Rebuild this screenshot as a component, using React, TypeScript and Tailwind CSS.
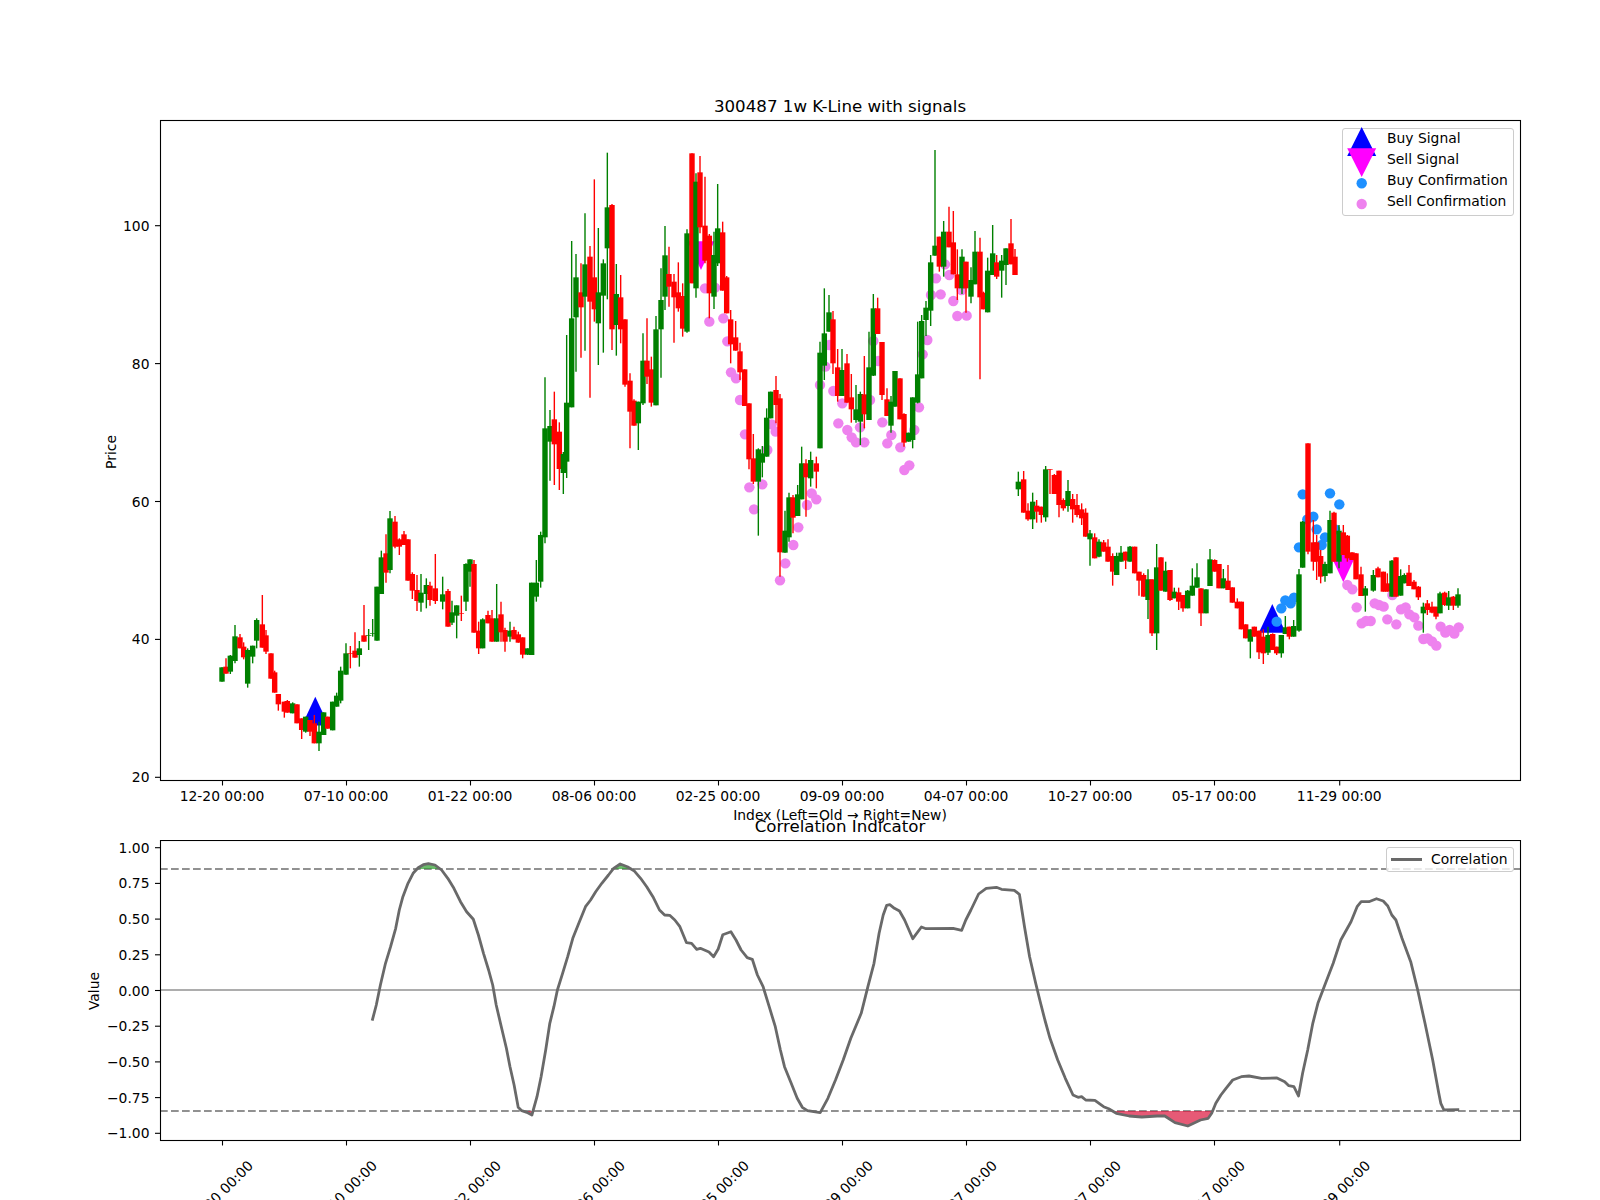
import React from 'react';

const G = 1;
const R = 0;

// candle rows traced per crop: [x, colour, wickTop, bodyTop, bodyBottom, wickBottom], crop pixels at 3x
const candleCrops: { x0: number; y0: number; rows: number[][] }[] = [
  {
    x0: 150,
    y0: 400,
    rows: [
      [216, G, 802, 802, 845, 845], [228, R, 775, 800, 821, 821], [241, G, 765, 767, 815, 822], [255, G, 675, 709, 783, 790],
      [270, R, 702, 712, 745, 745], [281, R, 727, 740, 772, 778], [293, G, 745, 750, 851, 863], [308, G, 737, 737, 770, 790],
      [320, G, 655, 660, 722, 745], [337, R, 585, 673, 743, 743], [348, R, 690, 706, 755, 762], [363, R, 760, 760, 836, 836],
      [374, R, 812, 817, 878, 878], [385, R, 882, 882, 913, 932], [403, R, 905, 905, 935, 953], [412, R, 900, 903, 938, 938],
      [428, G, 907, 910, 940, 940], [441, R, 913, 913, 970, 970], [455, R, 955, 955, 990, 1017], [467, G, 950, 950, 995, 998],
      [480, R, 960, 960, 995, 1008], [493, R, 945, 970, 1030, 1030], [507, G, 965, 995, 1030, 1053], [521, G, 937, 937, 1005, 1005],
      [533, R, 950, 950, 986, 986], [548, G, 905, 905, 991, 991], [560, G, 878, 887, 920, 920], [572, G, 800, 812, 902, 910],
      [588, G, 730, 760, 824, 824], [601, R, 738, 760, 762, 805], [615, R, 697, 752, 773, 773], [628, G, 723, 745, 765, 800],
      [642, R, 615, 706, 725, 725], [656, G, 687, 705, 707, 750], [668, G, 657, 700, 702, 710], [681, G, 560, 560, 722, 722],
      [694, G, 452, 472, 582, 582], [708, R, 403, 460, 518, 548], [720, G, 333, 355, 510, 520], [735, R, 348, 365, 440, 445],
      [748, R, 415, 418, 440, 465], [762, R, 393, 403, 435, 435], [774, R, 418, 418, 542, 542], [787, R, 517, 522, 572, 597],
      [801, R, 525, 570, 603, 633], [813, G, 522, 578, 608, 635], [829, G, 535, 555, 582, 625], [840, R, 545, 557, 600, 617],
      [856, R, 462, 565, 603, 612], [878, G, 530, 583, 605, 628], [894, R, 567, 573, 680, 680], [906, G, 602, 637, 668, 675],
      [920, G, 616, 616, 647, 715], [934, R, 587, 640, 642, 663], [948, G, 490, 492, 605, 633], [960, G, 478, 478, 515, 560],
      [972, R, 480, 492, 698, 698], [986, R, 665, 692, 745, 762], [998, G, 655, 658, 745, 745], [1014, R, 632, 645, 670, 670],
      [1026, R, 630, 655, 725, 725], [1040, G, 552, 655, 725, 725], [1053, R, 605, 643, 697, 725], [1065, R, 683, 690, 725, 755],
      [1080, G, 665, 692, 710, 725], [1092, R, 680, 690, 718, 718], [1105, R, 695, 703, 728, 728], [1118, R, 712, 712, 764, 775],
      [1133, G, 745, 745, 764, 765], [1145, G, 548, 548, 765, 765], [1159, G, 480, 548, 590, 605], [1172, G, 395, 405, 545, 563],
    ],
  },
  {
    x0: 500,
    y0: 130,
    rows: [
      [135, G, 742, 895, 1222, 1240], [150, G, 840, 888, 935, 1052], [163, R, 785, 868, 943, 1065], [178, R, 877, 905, 1017, 1080],
      [190, G, 966, 972, 1029, 1092], [200, G, 615, 818, 995, 1044], [215, G, 333, 565, 832, 832], [228, G, 372, 442, 562, 725],
      [243, R, 400, 487, 532, 683], [255, G, 250, 403, 500, 662], [270, R, 348, 380, 515, 803], [283, R, 148, 442, 538, 575],
      [295, G, 294, 487, 580, 705], [310, G, 388, 400, 497, 668], [322, G, 68, 232, 355, 508], [336, R, 222, 225, 598, 660],
      [349, G, 402, 492, 585, 677], [362, R, 435, 502, 598, 640], [375, R, 568, 568, 764, 770], [390, R, 730, 752, 845, 955],
      [402, R, 808, 812, 887, 887], [415, G, 815, 815, 880, 960], [429, G, 610, 692, 820, 825], [441, R, 565, 692, 740, 762],
      [454, R, 680, 718, 818, 830], [468, G, 558, 598, 826, 826], [483, G, 415, 510, 598, 743], [495, G, 288, 376, 500, 540],
      [507, R, 350, 432, 470, 530], [522, R, 432, 455, 502, 638], [535, R, 397, 487, 535, 545], [548, R, 460, 498, 596, 620],
      [561, G, 298, 310, 605, 608], [576, R, 70, 70, 460, 460], [588, G, 130, 155, 475, 503], [600, R, 78, 127, 292, 310],
      [615, R, 140, 287, 392, 400], [628, R, 312, 317, 490, 565], [642, G, 305, 375, 500, 537], [653, G, 162, 295, 400, 408],
    ],
  },
  {
    x0: 700,
    y0: 140,
    rows: [
      [68, R, 245, 277, 452, 452], [80, R, 408, 412, 520, 520], [92, R, 510, 538, 613, 670], [107, R, 543, 592, 632, 632],
      [120, R, 608, 634, 697, 720], [134, R, 688, 688, 798, 798],
    ],
  },
  {
    x0: 720,
    y0: 380,
    rows: [
      [87, R, 70, 70, 238, 268], [100, R, 162, 235, 305, 312], [115, G, 205, 208, 305, 467], [127, G, 198, 220, 248, 292],
      [140, G, 85, 113, 230, 230], [152, G, 35, 35, 115, 115], [168, R, -12, 30, 75, 130], [180, R, 42, 55, 517, 590],
      [195, G, 392, 452, 518, 518], [207, G, 338, 352, 472, 485], [219, R, 345, 352, 413, 460], [233, G, 315, 343, 408, 408],
      [245, G, 200, 250, 358, 358], [258, R, 238, 250, 292, 410], [272, G, 215, 240, 295, 320], [289, R, 230, 250, 275, 325],
    ],
  },
  {
    x0: 700,
    y0: 140,
    rows: [
      [360, G, 605, 638, 925, 925], [373, G, 445, 580, 677, 720], [387, G, 465, 517, 575, 575], [399, R, 513, 538, 670, 702],
      [413, R, 627, 682, 768, 785], [426, G, 627, 690, 768, 768], [441, R, 642, 670, 788, 788], [454, R, 702, 772, 808, 848],
      [468, G, 735, 808, 840, 848], [481, G, 755, 762, 845, 915], [493, R, 648, 763, 823, 865], [507, G, 575, 682, 840, 840],
      [520, G, 462, 505, 707, 708], [533, R, 473, 505, 582, 582], [546, R, 606, 606, 765, 780], [561, R, 745, 778, 828, 828],
      [573, G, 768, 785, 857, 878], [585, G, 693, 693, 800, 800], [600, R, 715, 715, 838, 838], [612, R, 820, 822, 908, 920],
      [626, G, 878, 878, 905, 905], [638, G, 772, 772, 900, 925], [653, G, 545, 703, 788, 790],
    ],
  },
  {
    x0: 900,
    y0: 140,
    rows: [
      [65, G, 525, 543, 715, 715], [78, G, 483, 503, 540, 588], [92, G, 345, 367, 512, 558], [105, G, 30, 317, 347, 347],
      [118, R, 290, 290, 380, 395], [131, G, 243, 275, 380, 410], [147, R, 200, 275, 322, 322], [160, R, 213, 307, 403, 403],
      [172, R, 328, 403, 445, 480], [186, G, 328, 350, 445, 462], [198, R, 365, 365, 445, 518], [213, G, 382, 420, 470, 490],
      [225, G, 273, 335, 433, 433], [240, R, 293, 335, 472, 718], [250, R, 455, 458, 508, 508], [263, G, 353, 392, 517, 517],
      [278, G, 255, 340, 405, 405], [290, R, 345, 367, 410, 417], [305, G, 345, 362, 392, 473], [318, G, 325, 325, 375, 435],
      [333, R, 237, 310, 373, 373], [345, R, 327, 350, 405, 405],
    ],
  },
  {
    x0: 1000,
    y0: 420,
    rows: [
      [55, G, 155, 185, 208, 228], [71, R, 153, 178, 278, 278], [84, R, 250, 272, 298, 302], [98, G, 218, 245, 298, 327],
      [110, R, 240, 257, 275, 308], [124, R, 260, 260, 285, 308], [137, G, 138, 148, 292, 305], [150, R, 148, 148, 150, 222],
      [163, R, 162, 165, 222, 222], [177, R, 152, 152, 255, 292], [190, R, 235, 240, 265, 272], [204, G, 180, 213, 258, 275],
      [218, R, 222, 237, 268, 308], [231, R, 222, 255, 285, 292], [245, R, 250, 268, 295, 315], [257, R, 265, 278, 350, 350],
      [270, G, 330, 340, 358, 437], [284, R, 340, 352, 415, 415], [297, G, 358, 365, 410, 412], [311, R, 360, 367, 395, 395],
      [324, R, 358, 380, 425, 425], [338, R, 400, 408, 455, 497], [350, G, 398, 408, 465, 465], [363, G, 378, 398, 425, 425],
      [377, R, 395, 395, 422, 447], [390, G, 378, 380, 425, 425], [404, R, 380, 380, 460, 460], [417, R, 455, 455, 482, 527],
      [431, R, 460, 465, 530, 530], [444, G, 448, 478, 540, 597], [456, R, 478, 478, 640, 648], [470, G, 372, 442, 640, 690],
      [483, R, 412, 412, 512, 512], [497, G, 425, 452, 515, 515], [510, R, 450, 450, 540, 543], [523, G, 503, 515, 535, 535],
      [536, R, 503, 517, 545, 570], [549, R, 525, 525, 565, 575], [563, G, 510, 512, 565, 565], [577, G, 445, 497, 527, 527],
      [591, G, 430, 472, 503, 503], [603, R, 505, 505, 580, 618], [618, G, 508, 508, 580, 580], [630, G, 387, 418, 498, 498],
      [644, R, 418, 420, 455, 455], [657, R, 432, 432, 505, 505], [670, G, 447, 475, 505, 505], [684, R, 435, 482, 510, 510],
      [697, R, 502, 502, 548, 548], [712, R, 535, 545, 565, 565], [724, R, 545, 545, 628, 628], [737, R, 613, 613, 655, 655],
      [751, G, 628, 628, 665, 715], [763, R, 620, 620, 650, 650], [777, R, 632, 632, 697, 717], [790, R, 628, 650, 700, 732],
      [804, G, 620, 645, 698, 705], [818, R, 640, 642, 690, 690], [830, R, 680, 680, 700, 705], [844, G, 645, 645, 700, 713],
      [856, G, 588, 622, 642, 642], [868, R, 620, 620, 650, 658], [881, G, 600, 618, 650, 650], [897, G, 447, 463, 632, 635],
      [908, G, 303, 305, 443, 443], [924, R, 70, 70, 395, 403], [940, R, 300, 367, 425, 452], [950, R, 345, 367, 425, 480],
      [962, R, 390, 408, 470, 490], [975, G, 425, 432, 468, 485], [990, G, 272, 300, 460, 460], [1002, R, 275, 278, 425, 425],
      [1017, G, 315, 332, 425, 445], [1030, R, 315, 337, 405, 405], [1042, R, 345, 347, 415, 425], [1056, R, 397, 397, 420, 420],
      [1068, R, 400, 400, 478, 478], [1083, R, 440, 463, 528, 528], [1096, G, 498, 505, 527, 575], [1120, G, 450, 465, 512, 515],
      [1134, R, 440, 445, 472, 472], [1150, R, 455, 455, 515, 515], [1162, R, 460, 490, 515, 515], [1176, G, 420, 422, 530, 530],
      [1188, R, 412, 412, 530, 530], [1202, G, 448, 468, 527, 527], [1213, G, 460, 465, 490, 490], [1227, R, 435, 458, 498, 498],
      [1242, R, 480, 485, 508, 508], [1255, R, 498, 500, 532, 540], [1270, G, 548, 560, 580, 638], [1282, R, 540, 550, 570, 585],
      [1296, R, 545, 560, 578, 580], [1308, R, 560, 560, 590, 598], [1320, G, 515, 520, 580, 580], [1334, R, 515, 518, 555, 558],
      [1346, G, 513, 532, 557, 570], [1360, R, 528, 530, 557, 570], [1374, G, 505, 523, 557, 563],
    ],
  },
];

const candles = candleCrops.flatMap(({ x0, y0, rows }) =>
  rows.map(([x, c, wt, bt, bb, wb]) => ({
    x: x0 + x / 3,
    color: c === G ? '#008000' : '#ff0000',
    wickTop: y0 + wt / 3,
    bodyTop: y0 + bt / 3,
    bodyBottom: y0 + bb / 3,
    wickBottom: y0 + wb / 3,
  })),
);

const fromCrop = (x0: number, y0: number, pts: number[][]) => pts.map(([x, y]) => [x0 + x / 3, y0 + y / 3]);

const sellDots = [
  ...fromCrop(700, 140, [[15, 445], [45, 443], [28, 545], [70, 535], [82, 604], [93, 697], [108, 715], [388, 615], [376, 680], [520, 603], [535, 663]]),
  ...fromCrop(720, 380, [
    [60, 60], [75, 163], [88, 322], [127, 313], [102, 388], [142, 210], [155, 133], [167, 155], [180, 601], [196, 550], [220, 495],
    [235, 442], [261, 375], [275, 340], [289, 358], [300, 15], [340, 33], [367, 70], [355, 130], [382, 150], [395, 172], [408, 187],
    [433, 187], [420, 142], [450, 60], [487, 127], [502, 190], [514, 165], [541, 202], [553, 270], [568, 256], [583, 150], [597, 82],
  ]),
  ...fromCrop(900, 140, [[68, 643], [82, 600], [93, 465], [108, 415], [135, 373], [122, 463], [148, 405], [160, 483], [172, 528], [200, 527], [185, 450]]),
  ...fromCrop(1000, 420, [
    [1042, 495], [1057, 508], [1070, 562], [1085, 610], [1098, 603], [1112, 603], [1124, 550], [1137, 555], [1151, 560], [1162, 598],
    [1177, 525], [1189, 613], [1203, 568], [1217, 562], [1228, 583], [1243, 592], [1255, 617], [1270, 657], [1283, 655], [1296, 664],
    [1309, 677], [1322, 620], [1336, 638], [1349, 630], [1363, 641], [1376, 622],
  ]),
];

const buyDots = fromCrop(1000, 420, [
  [830, 605], [844, 565], [856, 541], [872, 550], [882, 533], [897, 382], [908, 223], [922, 298], [940, 290], [950, 328], [965, 375],
  [975, 352], [990, 220], [1005, 328], [1018, 253],
]);

// correlation curve, traced in two crops that were 800 wide and came back 1568 wide
const curveLeft = [
  [612, 662], [620, 615], [628, 555], [638, 490], [648, 440], [658, 385], [665, 330], [672, 290], [682, 250], [692, 220], [702, 203],
  [712, 194], [722, 191], [735, 195], [748, 210], [760, 235], [772, 265], [785, 305], [797, 335], [810, 358], [820, 405], [830, 460],
  [840, 510], [848, 555], [855, 615], [865, 680], [875, 745], [882, 800], [890, 855], [898, 922], [905, 932], [915, 937], [925, 945],
  [935, 890], [943, 830], [952, 750], [960, 670], [968, 620], [975, 570], [985, 520], [995, 470], [1005, 415], [1018, 365], [1030, 320],
  [1040, 300], [1050, 275], [1062, 250], [1075, 225], [1085, 205], [1098, 192], [1112, 200], [1125, 212], [1138, 235], [1150, 260],
  [1162, 290], [1175, 330], [1185, 345], [1195, 346], [1205, 360], [1215, 380], [1228, 428], [1238, 430], [1248, 448], [1255, 445],
  [1272, 456], [1281, 470], [1290, 447], [1299, 404], [1315, 395], [1325, 420], [1335, 450], [1347, 473], [1357, 478], [1367, 525],
  [1378, 560], [1390, 620], [1402, 680], [1412, 750], [1420, 800], [1432, 845], [1445, 895], [1455, 922], [1465, 932], [1490, 938],
  [1505, 895], [1520, 840], [1535, 780], [1550, 715],
];
const curveRight = [
  [120, 640], [133, 560], [145, 490], [155, 400], [163, 345], [170, 316], [176, 314], [185, 325], [195, 333], [205, 360], [221, 416],
  [238, 381], [247, 386], [300, 385], [317, 391], [325, 360], [335, 330], [350, 282], [365, 265], [385, 262], [395, 268], [420, 271],
  [430, 283], [440, 380], [450, 470], [462, 550], [470, 600], [480, 660], [490, 715], [505, 780], [520, 835], [535, 885], [545, 892],
  [552, 890], [560, 900], [578, 901], [595, 920], [605, 926], [620, 940], [645, 948], [670, 951], [700, 948], [715, 948], [735, 968],
  [760, 978], [785, 960], [800, 955], [807, 940], [815, 910], [825, 885], [835, 865], [848, 840], [865, 830], [880, 828], [905, 835],
  [935, 834], [950, 845], [958, 857], [968, 860], [977, 888], [985, 820], [995, 750], [1005, 670], [1015, 610], [1030, 550], [1045, 490],
  [1060, 420], [1080, 365], [1092, 320], [1100, 305], [1115, 305], [1130, 296], [1143, 303], [1152, 318], [1160, 345], [1168, 360],
  [1180, 415], [1197, 485], [1210, 565], [1225, 670], [1240, 780], [1252, 880], [1256, 910], [1262, 930], [1292, 929],
];
const curve = [
  ...curveLeft.map(([x, y]) => [60 + x / 1.96, 800 + y / 3]),
  ...curveRight.map(([x, y]) => [800 + x / 1.96, 800 + y / 3]),
];
const curvePoints = curve.map(([x, y]) => `${x.toFixed(1)},${y.toFixed(1)}`).join(' ');

const HIGH_Y = 869;
const LOW_Y = 1111;
const closedCurve = (y: number) => `${curve[0][0]},${y} ${curvePoints} ${curve[curve.length - 1][0]},${y}`;

const xTicks = [
  [222.5, '12-20 00:00'], [346.5, '07-10 00:00'], [470.5, '01-22 00:00'], [594.5, '08-06 00:00'], [718.5, '02-25 00:00'],
  [842.5, '09-09 00:00'], [966.5, '04-07 00:00'], [1090.5, '10-27 00:00'], [1214.5, '05-17 00:00'], [1339.7, '11-29 00:00'],
] as [number, string][];

const priceTicks = [20, 40, 60, 80, 100];
const valueTicks = ['1.00', '0.75', '0.50', '0.25', '0.00', '−0.25', '−0.50', '−0.75', '−1.00'];
const legendRows = ['Buy Signal', 'Sell Signal', 'Buy Confirmation', 'Sell Confirmation'];

const Triangle = ({ x, y, flip, fill }: { x: number; y: number; flip?: boolean; fill: string }) => {
  // x, y is the point of the triangle
  const h = flip ? -28.7 : 28.7;
  return <polygon points={`${x},${y} ${x - 13.5},${y + h} ${x + 13.5},${y + h}`} fill={fill} />;
};

const Frame = ({ top, bottom }: { top: number; bottom: number }) => (
  <g>
    <rect x={160.5} y={top} width={1360} height={bottom - top} fill="none" stroke="#000" strokeWidth={1.1} />
    {xTicks.map(([x]) => (
      <line key={x} x1={x} x2={x} y1={bottom} y2={bottom + 5} stroke="#000" strokeWidth={1.1} />
    ))}
  </g>
);

export default function App() {
  return (
    <div className="flex flex-col w-[1600px] h-[1200px] bg-white text-black overflow-hidden font-['DejaVu_Sans',sans-serif]">
      {/* K-line panel */}
      <div className="flex items-end justify-center h-[120px] w-[1360px] ml-[160px] pb-[3px] text-[16.67px] leading-[20px]">
        300487 1w K-Line with signals
      </div>
      <div className="relative h-[696px] w-[1600px]">
        <svg width={1600} height={696} viewBox="0 120 1600 696" className="block overflow-visible" fontSize={13.89}>
          <Triangle x={315.3} y={696.7} fill="#0000ff" />
          <Triangle x={1272.3} y={604} fill="#0000ff" />
          <Triangle x={701} y={270} flip fill="#ff00ff" />
          <Triangle x={1343.3} y={582.3} flip fill="#ff00ff" />
          {buyDots.map(([x, y], i) => (
            <circle key={i} cx={x} cy={y} r={5.2} fill="#1e90ff" />
          ))}
          {sellDots.map(([x, y], i) => (
            <circle key={i} cx={x} cy={y} r={5.2} fill="#ee82ee" />
          ))}
          {candles.map((c, i) => (
            <g key={i}>
              <line x1={c.x} x2={c.x} y1={c.wickTop} y2={c.wickBottom} stroke={c.color} strokeWidth={1.4} />
              <rect x={c.x - 2.7} y={c.bodyTop} width={5.4} height={c.bodyBottom - c.bodyTop} fill={c.color} />
            </g>
          ))}
          <Frame top={120.5} bottom={780.5} />
          {priceTicks.map((v) => {
            const y = 777.3 - (v - 20) * 6.895;
            return (
              <g key={v}>
                <line x1={155} x2={160} y1={y} y2={y} stroke="#000" strokeWidth={1.1} />
                <text x={149.5} y={y} textAnchor="end" dominantBaseline="central">{v}</text>
              </g>
            );
          })}
          {xTicks.map(([x, label]) => (
            <text key={x} x={x - 0.5} y={796} textAnchor="middle" dominantBaseline="central">{label}</text>
          ))}
          <text x={840} y={815} textAnchor="middle" dominantBaseline="central">Index (Left=Old → Right=New)</text>
          <text transform="translate(111 452) rotate(-90)" textAnchor="middle" dominantBaseline="central">Price</text>
        </svg>
        <div className="absolute top-[8px] right-[86px] flex w-[172px] h-[88px] gap-[5px] rounded-[3px] border border-[#cccccc] bg-white/80 pl-[4px] text-[13.89px] leading-[21px]">
          {/* legend glyphs hang over the box top, as the markers are bigger than their rows */}
          <svg width={35} height={88} viewBox="1347 128 35 88" className="shrink-0 overflow-visible">
            <polygon points="1361.7,126 1347.2,155 1376.2,155" fill="#0000ff" />
            <polygon points="1361.7,176 1347.2,147.3 1376.2,147.3" fill="#ff00ff" />
            <circle cx={1361.7} cy={182.3} r={5.2} fill="#1e90ff" />
            <circle cx={1361.7} cy={203} r={5.2} fill="#ee82ee" />
          </svg>
          <div className="flex flex-col -mt-px">
            {legendRows.map((row) => (
              <span key={row}>{row}</span>
            ))}
          </div>
        </div>
      </div>

      {/* correlation panel */}
      <div className="flex items-start justify-center h-[24px] w-[1360px] ml-[160px] pt-[1px] text-[16.67px] leading-[20px]">
        Correlation Indicator
      </div>
      <div className="relative h-[360px] w-[1600px]">
        <svg width={1600} height={360} viewBox="0 840 1600 360" className="block" fontSize={13.89}>
          <defs>
            <clipPath id="above-high">
              <rect x={160} y={840} width={1360} height={HIGH_Y - 840} />
            </clipPath>
            <clipPath id="below-low">
              <rect x={160} y={LOW_Y} width={1360} height={1140 - LOW_Y} />
            </clipPath>
          </defs>
          <line x1={160} x2={1520} y1={990} y2={990} stroke="#adadad" strokeWidth={2} />
          <line x1={160} x2={1520} y1={HIGH_Y} y2={HIGH_Y} stroke="#919191" strokeWidth={2} strokeDasharray="7.7 3.3" />
          <line x1={160} x2={1520} y1={LOW_Y} y2={LOW_Y} stroke="#919191" strokeWidth={2} strokeDasharray="7.7 3.3" />
          <polygon points={closedCurve(HIGH_Y)} fill="#2ca02c" fillOpacity={0.7} clipPath="url(#above-high)" />
          <polygon points={closedCurve(LOW_Y)} fill="#dc143c" fillOpacity={0.7} clipPath="url(#below-low)" />
          <polyline points={curvePoints} fill="none" stroke="#696969" strokeWidth={2.8} strokeLinejoin="round" />
          <Frame top={840.5} bottom={1140.5} />
          {valueTicks.map((label, i) => {
            const y = 847.7 + i * 35.7;
            return (
              <g key={label}>
                <line x1={155} x2={160} y1={y} y2={y} stroke="#000" strokeWidth={1.1} />
                <text x={149.5} y={y} textAnchor="end" dominantBaseline="central">{label}</text>
              </g>
            );
          })}
          {xTicks.map(([x, label]) => (
            <text key={x} transform={`translate(${x - 2} 1193) rotate(-45)`} textAnchor="middle" dominantBaseline="central">{label}</text>
          ))}
          <text transform="translate(94 991) rotate(-90)" textAnchor="middle" dominantBaseline="central">Value</text>
        </svg>
        <div className="absolute top-[7px] right-[86px] flex items-center w-[128px] h-[25px] rounded-[3px] border border-[#cccccc] bg-white/80 pl-[4px] gap-[9px] text-[13.89px]">
          <div className="w-[31px] h-[3px] bg-[#696969]" />
          <span>Correlation</span>
        </div>
      </div>
    </div>
  );
}
